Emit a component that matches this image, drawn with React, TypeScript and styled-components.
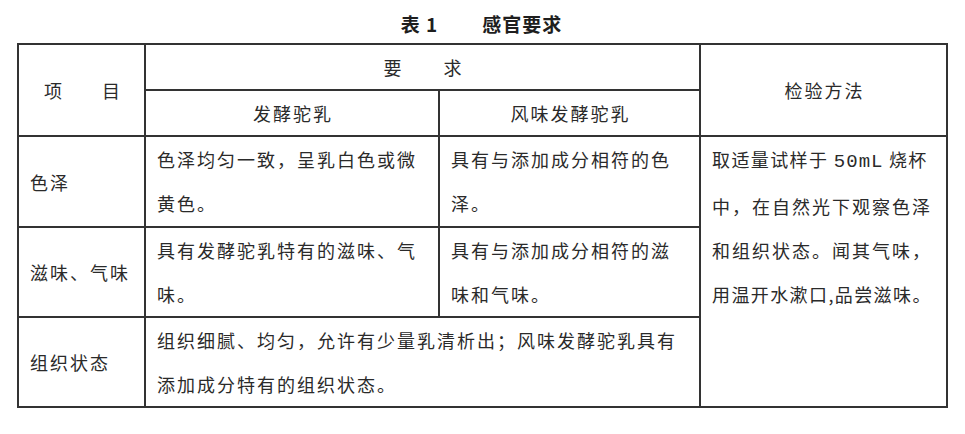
import React from "react";
import styled, { createGlobalStyle } from "styled-components";

const GlobalStyle = createGlobalStyle`
  html, body { margin: 0; padding: 0; background: #ffffff; }
  body {
    font-family: "Noto Sans CJK SC", "Noto Sans", sans-serif;
    color: #262626;
  }
`;

const Page = styled.div`
  width: 965px;
  height: 434px;
  background: #fff;
  overflow: hidden;
`;

const Title = styled.div`
  height: 43px;
  display: flex;
  align-items: center;
  justify-content: center;
  gap: 44px;
  font-size: 19px;
  font-weight: 700;
  color: #1e1e1e;
  padding-top: 3px;
  box-sizing: border-box;
  letter-spacing: 1px;
  & > span:first-child { margin-left: -2px; }
`;

const Table = styled.table`
  margin-left: 17px;
  border-collapse: collapse;
  table-layout: fixed;
  width: 929px;
  font-size: 18px;
  color: #2a2a2a;
`;

const Cell = styled.td<{ $align?: "left" | "center"; $valign?: "top" | "middle" }>`
  border: 2px solid #333;
  padding: 0 9px 0 11px;
  text-align: ${(p) => p.$align ?? "left"};
  vertical-align: ${(p) => p.$valign ?? "middle"};
  line-height: 44px;
  letter-spacing: 2px;
  font-weight: 400;
  white-space: nowrap;
`;

const Row = styled.tr<{ $h: number }>`
  height: ${(p) => p.$h}px;
`;

const Line = styled.div<{ $tight?: boolean }>`
  letter-spacing: ${(p) => (p.$tight ? "1.4px" : "2px")};
`;

const Spread = styled.div`
  display: flex;
  justify-content: space-between;
  padding: 0 15px 0 14px;
  letter-spacing: 0;
`;

const Latin = styled.span`
  font-family: "Liberation Mono", monospace;
  letter-spacing: 1px;
  font-size: 19px;
`;

export default function App() {
  return (
    <Page>
      <GlobalStyle />
      <Title>
        <span>表 1</span>
        <span>感官要求</span>
      </Title>
      <Table>
        <colgroup>
          <col style={{ width: 127 }} />
          <col style={{ width: 294 }} />
          <col style={{ width: 261 }} />
          <col style={{ width: 247 }} />
        </colgroup>
        <tbody>
          <Row $h={45}>
            <Cell rowSpan={2}>
              <Spread>
                <span>项</span>
                <span>目</span>
              </Spread>
            </Cell>
            <Cell colSpan={2} $align="center">要　　求</Cell>
            <Cell rowSpan={2} $align="center">检验方法</Cell>
          </Row>
          <Row $h={46}>
            <Cell $align="center">发酵驼乳</Cell>
            <Cell $align="center">风味发酵驼乳</Cell>
          </Row>
          <Row $h={91}>
            <Cell>色泽</Cell>
            <Cell $valign="top">
              <Line>色泽均匀一致，呈乳白色或微</Line>
              <Line>黄色。</Line>
            </Cell>
            <Cell $valign="top">
              <Line>具有与添加成分相符的色</Line>
              <Line>泽。</Line>
            </Cell>
            <Cell rowSpan={3} $valign="top">
              <Line $tight>
                取适量试样于 <Latin>50mL</Latin> 烧杯
              </Line>
              <Line>中，在自然光下观察色泽</Line>
              <Line>和组织状态。闻其气味，</Line>
              <Line $tight>用温开水漱口,品尝滋味。</Line>
            </Cell>
          </Row>
          <Row $h={90}>
            <Cell>滋味、气味</Cell>
            <Cell $valign="top">
              <Line>具有发酵驼乳特有的滋味、气</Line>
              <Line>味。</Line>
            </Cell>
            <Cell $valign="top">
              <Line>具有与添加成分相符的滋</Line>
              <Line>味和气味。</Line>
            </Cell>
          </Row>
          <Row $h={90}>
            <Cell>组织状态</Cell>
            <Cell colSpan={2} $valign="top">
              <Line>组织细腻、均匀，允许有少量乳清析出；风味发酵驼乳具有</Line>
              <Line>添加成分特有的组织状态。</Line>
            </Cell>
          </Row>
        </tbody>
      </Table>
    </Page>
  );
}
